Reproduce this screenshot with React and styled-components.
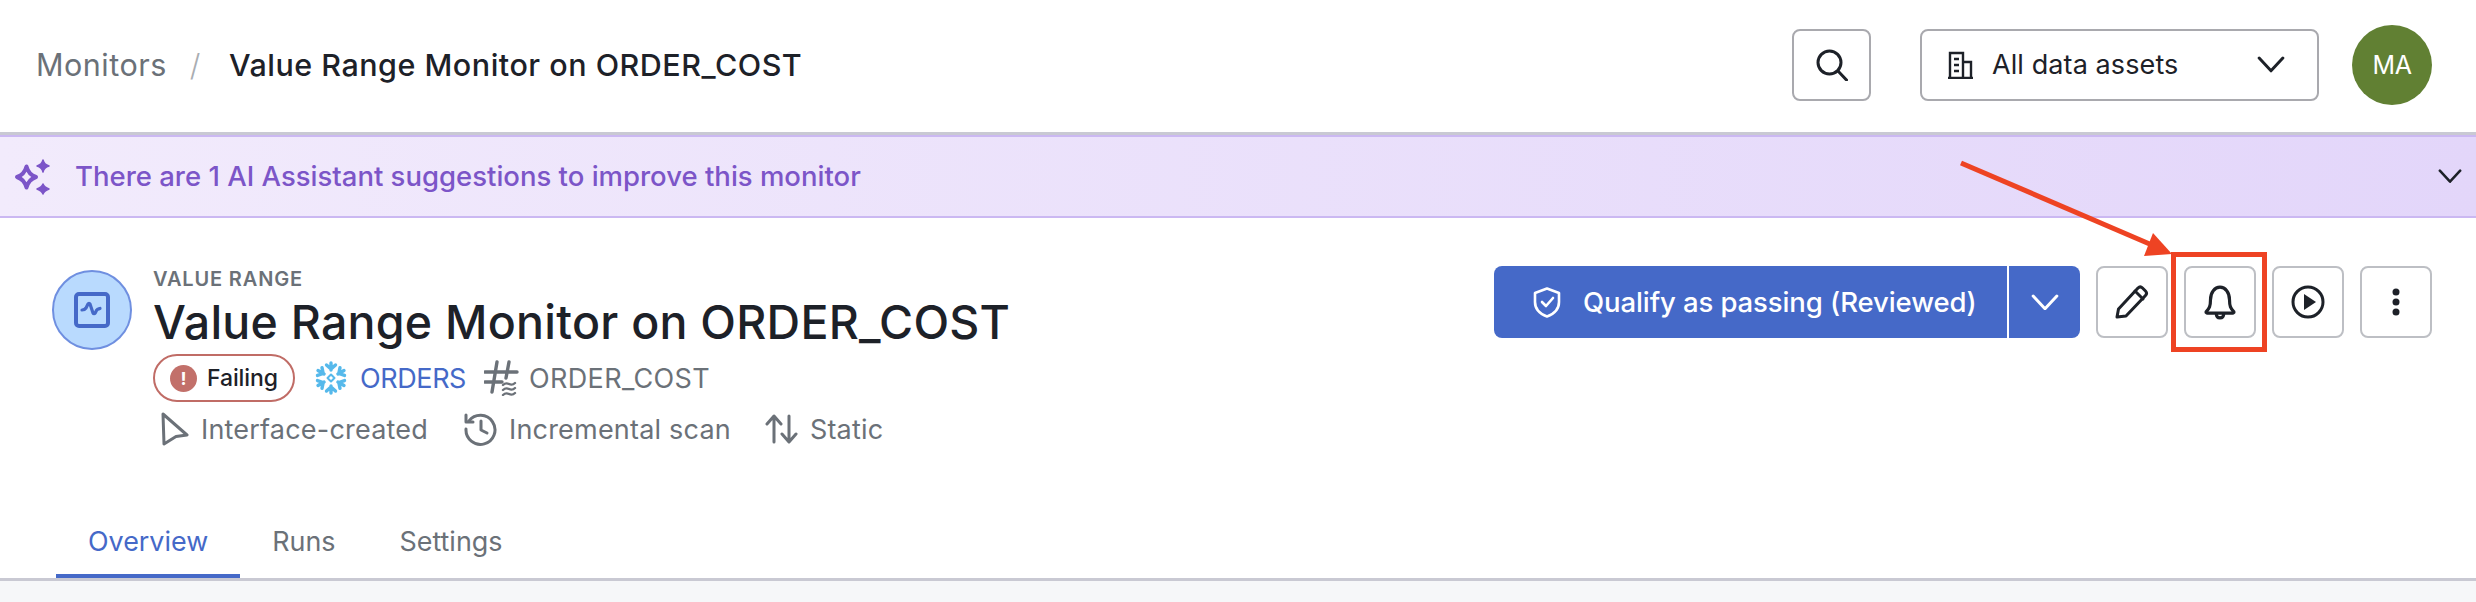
import React from "react";
import styled, { createGlobalStyle } from "styled-components";

const Global = createGlobalStyle`
  html, body { margin: 0; padding: 0; background: #f6f7f9; overflow: hidden; }
  body { font-family: Inter, "Liberation Sans", sans-serif; color: #1d2128; }
  * { box-sizing: border-box; }
`;

const Page = styled.div`
  position: relative;
  width: 2476px;
  height: 602px;
  overflow: hidden;
`;

const TopBar = styled.header`
  height: 135px;
  background: #fff;
  border-bottom: 3px solid #c9c9d3;
  display: flex;
  align-items: center;
  padding: 0 44px 3px 36px;
`;

const Breadcrumb = styled.nav`
  display: flex;
  align-items: baseline;
  font-size: 30.5px;
  letter-spacing: 0.5px;
  flex: 1;
`;
const CrumbLink = styled.span`
  color: #6b7178;
`;
const CrumbSep = styled.span`
  color: #a9adb2;
  margin: 0 28px 0 23px;
  font-weight: 300;
`;
const CrumbCurrent = styled.span`
  color: #1d2128;
  font-weight: 500;
`;

const TopActions = styled.div`
  display: flex;
  align-items: center;
`;
const SearchButton = styled.button`
  width: 79px;
  height: 72px;
  background: #fff;
  border: 2px solid #a9a9ae;
  border-radius: 8px;
  display: flex;
  align-items: center;
  justify-content: center;
  padding: 0;
  margin-right: 49px;
`;
const AssetSelect = styled.div`
  width: 399px;
  height: 72px;
  border: 2px solid #a9a9ae;
  border-radius: 8px;
  display: flex;
  align-items: center;
  padding: 0 32px 0 25px;
  font-size: 27px;
  letter-spacing: 0.1px;
  margin-right: 33px;
`;
const AssetLabel = styled.span`
  margin-left: 19px;
  flex: 1;
`;
const Avatar = styled.div`
  width: 80px;
  height: 80px;
  border-radius: 50%;
  background: #618033;
  color: #fff;
  display: flex;
  align-items: center;
  justify-content: center;
  font-size: 25px;
  letter-spacing: -0.3px;
`;

const Banner = styled.div`
  height: 83px;
  background: linear-gradient(90deg, #f2ebfc 0%, #e3d6fa 100%);
  border-top: 2px solid #cbb8f2;
  border-bottom: 2px solid #cbb8f2;
  display: flex;
  align-items: center;
  padding: 0 14px 0 14px;
`;
const BannerText = styled.span`
  margin-left: 25px;
  margin-bottom: 2px;
  flex: 1;
  font-size: 27.5px;
  color: #7c55c8;
  font-weight: 500;
`;

const Header = styled.section`
  height: 300px;
  background: #fff;
  display: flex;
  justify-content: space-between;
  padding: 48px 44px 0 52px;
`;
const Summary = styled.div`
  display: flex;
  align-items: flex-start;
`;
const IconDisc = styled.div`
  width: 80px;
  height: 80px;
  margin-top: 4px;
  border-radius: 50%;
  background: #b9dafe;
  border: 2px solid #6f8fe0;
  display: flex;
  align-items: center;
  justify-content: center;
  flex: none;
`;
const SummaryBody = styled.div`
  margin-left: 21px;
  display: flex;
  flex-direction: column;
  align-items: flex-start;
`;
const Kicker = styled.div`
  font-size: 20px;
  line-height: 22px;
  margin-top: 2px;
  font-weight: 600;
  letter-spacing: 0.85px;
  color: #6b7178;
`;
const Title = styled.h1`
  margin: 4px 0 0;
  font-size: 46.5px;
  line-height: 56px;
  font-weight: 500;
  letter-spacing: 0.25px;
  color: #1d2128;
`;
const MetaRow = styled.div`
  display: flex;
  align-items: center;
  height: ${(p) => p.$height}px;
  margin-top: ${(p) => p.$top}px;
`;
const StatusPill = styled.div`
  width: 142px;
  height: 48px;
  border: 2px solid #c06c66;
  border-radius: 24px;
  display: flex;
  align-items: center;
  padding-left: 15px;
  font-size: 23px;
  font-weight: 500;
  letter-spacing: -0.1px;
  color: #1d2128;
  margin-right: 18px;
`;
const StatusDot = styled.span`
  width: 27px;
  height: 27px;
  border-radius: 50%;
  background: #c2706a;
  color: #fff;
  font-size: 18px;
  font-weight: 700;
  display: flex;
  align-items: center;
  justify-content: center;
  margin-right: 10px;
  letter-spacing: 0;
`;
const MetaItem = styled.span`
  display: inline-flex;
  align-items: center;
  font-size: 27px;
  letter-spacing: ${(p) => p.$ls ?? 0.2}px;
  color: ${(p) => p.$color || "#6b7178"};
  margin-left: ${(p) => p.$left || 0}px;
  svg { flex: none; margin-right: ${(p) => p.$gap || 11}px; }
`;

const Actions = styled.div`
  display: flex;
  align-items: flex-start;
  gap: 16px;
`;
const SplitButton = styled.div`
  width: 586px;
  height: 72px;
  background: #4569c8;
  border-radius: 8px;
  display: flex;
  color: #fff;
`;
const SplitMain = styled.div`
  width: 515px;
  padding-left: 39px;
  border-right: 2px solid #fff;
  display: flex;
  align-items: center;
  font-size: 27.5px;
  font-weight: 500;
  letter-spacing: -0.1px;
`;
const SplitLabel = styled.span`
  margin-left: 22px;
`;
const SplitToggle = styled.div`
  flex: 1;
  display: flex;
  align-items: center;
  justify-content: center;
`;
const IconButton = styled.button`
  width: 72px;
  height: 72px;
  padding: 0;
  background: #fff;
  border: 2px solid #bdbfc4;
  border-radius: 8px;
  display: flex;
  align-items: center;
  justify-content: center;
`;

const Tabs = styled.nav`
  height: 63px;
  background: #fff;
  border-bottom: 3px solid #c9c9d3;
  display: flex;
  padding-left: 56px;
`;
const Tab = styled.div`
  height: 60px;
  padding: 0 32px 10px;
  display: flex;
  align-items: center;
  font-size: 26.9px;
  color: ${(p) => (p.$active ? "#4569c8" : "#6b7178")};
  border-bottom: 4px solid ${(p) => (p.$active ? "#4569c8" : "transparent")};
`;

const Annotation = styled.svg`
  position: absolute;
  left: 0;
  top: 0;
  pointer-events: none;
`;

const Chevron = ({ size = 28, color = "#1d2128", w = 3 }) => (
  <svg width={size} height={size * 0.6} viewBox="0 0 28 17" fill="none">
    <path d="M2 2l12 13L26 2" stroke={color} strokeWidth={w} strokeLinecap="round" strokeLinejoin="round" />
  </svg>
);

const Spark = () => (
  <svg width="36" height="36" viewBox="0 0 36 36" fill="none" stroke="#7c55c8" strokeLinejoin="round">
    <path d="M12.500 7.500Q14.500 15.500 22 18Q14.500 20.500 12.500 28.500Q10.500 20.500 3 18Q10.500 15.500 12.500 7.500Z" strokeWidth="4" />
    <path d="M29 1Q30 5.500 35 7Q30 8.500 29 13Q28 8.500 23 7Q28 5.500 29 1ZM29 25Q30 28 35 30Q30 32 29 35Q28 32 23 30Q28 28 29 25Z" fill="#7c55c8" strokeWidth="1.500" />
  </svg>
);

const Snowflake = () => (
  <svg width="36" height="34" viewBox="-18 -17 36 34" fill="none" stroke="#56b9eb" strokeWidth="3.400" strokeLinecap="round" strokeLinejoin="round">
    {[0, 60, 120, 180, 240, 300].map((a) => (
      <g key={a} transform={`rotate(${a})`}>
        <path d="M0 -8V-15M-4.500 -13L0 -9L4.500 -13" />
      </g>
    ))}
    <path d="M0 -3.500L3.500 0L0 3.500L-3.500 0Z" strokeWidth="2" />
  </svg>
);

export default function App() {
  return (
    <Page>
      <Global />
      <TopBar>
        <Breadcrumb>
          <CrumbLink>Monitors</CrumbLink>
          <CrumbSep>/</CrumbSep>
          <CrumbCurrent>Value Range Monitor on ORDER_COST</CrumbCurrent>
        </Breadcrumb>
        <TopActions>
          <SearchButton aria-label="Search">
            <svg width="32" height="32" viewBox="0 0 32 32" fill="none" stroke="#1d2128" strokeWidth="3" strokeLinecap="round">
              <circle cx="13.500" cy="13.500" r="11.500" />
              <path d="M22 22l8.500 9" />
            </svg>
          </SearchButton>
          <AssetSelect>
            <svg width="26" height="28" viewBox="0 0 26 28" fill="none" stroke="#1d2128" strokeWidth="2.400">
              <path d="M1 27h25M3 27V2h13v25M16 11h8v16" />
              <path d="M7 8h5M7 14h5M7 20h5" strokeWidth="2.600" />
            </svg>
            <AssetLabel>All data assets</AssetLabel>
            <Chevron />
          </AssetSelect>
          <Avatar>MA</Avatar>
        </TopActions>
      </TopBar>
      <Banner>
        <Spark />
        <BannerText>There are 1 AI Assistant suggestions to improve this monitor</BannerText>
        <Chevron size={24} />
      </Banner>
      <Header>
        <Summary>
          <IconDisc>
            <svg width="36" height="36" viewBox="0 0 36 36" fill="none" stroke="#4569c8">
              <rect x="2" y="2" width="32" height="32" rx="3" strokeWidth="4" />
              <path d="M8 18c2 0 3-.5 4-2l2-4c.5-1 1.500-1 2 0l3 9c.5 1 1.500 1 2.200 0l1.500-3c.5-.8 1.500-1 3.300-1.500" strokeWidth="3.200" strokeLinecap="round" strokeLinejoin="round" />
            </svg>
          </IconDisc>
          <SummaryBody>
            <Kicker>VALUE RANGE</Kicker>
            <Title>Value Range Monitor on ORDER_COST</Title>
            <MetaRow $height={48} $top={4}>
              <StatusPill>
                <StatusDot>!</StatusDot>
                Failing
              </StatusPill>
              <MetaItem $color="#4569c8" $gap={11} $ls={-0.4}>
                <Snowflake />
                ORDERS
              </MetaItem>
              <MetaItem $left={18} $gap={10} $ls={0.35}>
                <svg width="35" height="36" viewBox="0 0 35 36" fill="none" stroke="#6b7178" strokeWidth="3.400" strokeLinecap="round">
                  <path d="M13 2L8 32M25 2L22 18M1 12h32M1 22h17" />
                  <path d="M19 25c2-2 4-2 6-1s4 1 6-1M19 30c2-2 4-2 6-1s4 1 6-1M19 35c2-2 4-2 6-1s4 1 6-1" strokeWidth="2.400" />
                </svg>
                ORDER_COST
              </MetaItem>
            </MetaRow>
            <MetaRow $height={36} $top={9}>
              <MetaItem $left={8} $gap={12}>
                <svg width="28" height="34" viewBox="0 0 28 34" fill="none" stroke="#6b7178" strokeWidth="3" strokeLinejoin="round">
                  <path d="M2 2l24 21-11 1.500L3 32z" />
                </svg>
                Interface-created
              </MetaItem>
              <MetaItem $left={36} $gap={11}>
                <svg width="34" height="34" viewBox="0 0 34 34" fill="none" stroke="#6b7178" strokeWidth="3" strokeLinecap="round" strokeLinejoin="round">
                  <path d="M5 9a14.500 14.500 0 1 1-3 8" />
                  <path d="M2 3v7h7" />
                  <path d="M17 9v9l6 3" />
                </svg>
                Incremental scan
              </MetaItem>
              <MetaItem $left={34} $gap={12}>
                <svg width="33" height="30" viewBox="0 0 33 30" fill="none" stroke="#6b7178" strokeWidth="3" strokeLinecap="round" strokeLinejoin="round">
                  <path d="M9 28V3M2 10l7-8 7 8M24 2v25M17 20l7 8 7-8" />
                </svg>
                Static
              </MetaItem>
            </MetaRow>
          </SummaryBody>
        </Summary>
        <Actions>
          <SplitButton>
            <SplitMain>
              <svg width="28" height="31" viewBox="0 0 28 31" fill="none" stroke="#fff" strokeWidth="2.600" strokeLinecap="round" strokeLinejoin="round">
                <path d="M14 1.500L26 6v9c0 7-5 12-12 14.500C7 27 2 22 2 15V6z" />
                <path d="M9 15l4 4 7-8" />
              </svg>
              <SplitLabel>Qualify as passing (Reviewed)</SplitLabel>
            </SplitMain>
            <SplitToggle>
              <Chevron color="#fff" />
            </SplitToggle>
          </SplitButton>
          <IconButton aria-label="Edit">
            <svg width="36" height="36" viewBox="0 0 36 36" fill="none" stroke="#1d2128" strokeWidth="3" strokeLinejoin="round" strokeLinecap="round">
              <path d="M3 33l1.500-8L24 4c1.500-1.500 3-1.500 4.500 0l3 3c1.400 1.500 1.400 3 0 4.500L12 32z" />
              <path d="M21 7l8 8" />
            </svg>
          </IconButton>
          <IconButton aria-label="Notifications">
            <svg width="32" height="36" viewBox="0 0 30 34" fill="none" stroke="#1d2128" strokeWidth="3" strokeLinejoin="round">
              <path d="M2 26c3-3 4-5 4-11 0-7 4-12 9-12s9 5 9 12c0 6 1 8 4 11 .5 1-.5 1.500-1 1.500H3c-.5 0-1.500-.5-1-1.500z" />
              <path d="M11.500 28c0 2.500 1.500 4 3.500 4s3.500-1.500 3.500-4" />
            </svg>
          </IconButton>
          <IconButton aria-label="Run">
            <svg width="34" height="34" viewBox="0 0 34 34" fill="none">
              <circle cx="17" cy="17" r="15" stroke="#1d2128" strokeWidth="3" />
              <path d="M13 9l12 8-12 8z" fill="#1d2128" />
            </svg>
          </IconButton>
          <IconButton aria-label="More">
            <svg width="8" height="28" viewBox="0 0 8 28" fill="#1d2128">
              <circle cx="4" cy="4" r="3.500" />
              <circle cx="4" cy="14" r="3.500" />
              <circle cx="4" cy="24" r="3.500" />
            </svg>
          </IconButton>
        </Actions>
      </Header>
      <Tabs>
        <Tab $active>Overview</Tab>
        <Tab>Runs</Tab>
        <Tab>Settings</Tab>
      </Tabs>
      <Annotation width="2476" height="602" viewBox="0 0 2476 602">
        <path d="M1961 163L2152 245" stroke="#ee4323" strokeWidth="5" />
        <path d="M2153 233L2172 254L2144 256Z" fill="#ee4323" />
        <rect x="2173.500" y="254.500" width="91" height="95" fill="none" stroke="#ee4323" strokeWidth="5" />
      </Annotation>
    </Page>
  );
}
